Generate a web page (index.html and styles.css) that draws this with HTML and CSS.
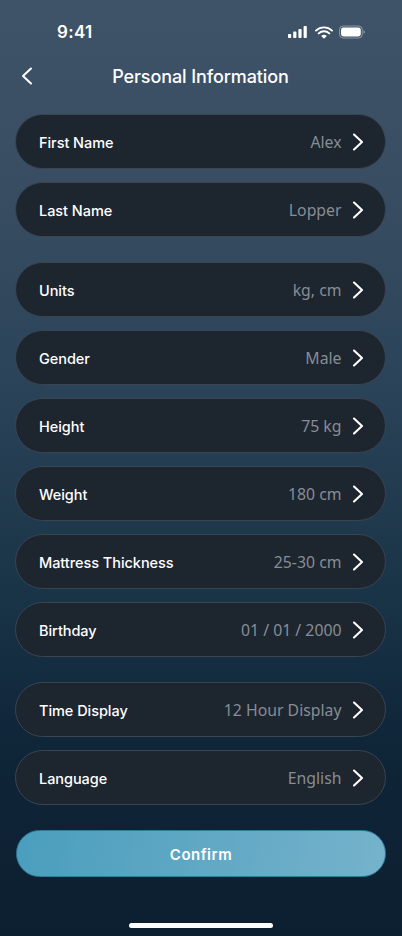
FILE: index.html
```html
<!DOCTYPE html>
<html lang="en">
<head>
<meta charset="utf-8">
<title>Personal Information</title>
<link rel="stylesheet" href="styles.css">
</head>
<body>
<svg class="defs" width="0" height="0" aria-hidden="true"><symbol id="chev" viewBox="0 0 12 18"><path d="M2 1.5 10 9l-8 7.5" fill="none" stroke="currentColor" stroke-width="2.1" stroke-linecap="round" stroke-linejoin="round"/></symbol></svg>
<main class="screen">
  <header class="status">
    <span class="time">9:41</span>
    <span class="status-icons">
      <svg class="signal" viewBox="0 0 20 12" width="20" height="12"><rect x="0" y="8" width="3.2" height="4" rx=".8"/><rect x="5.2" y="5.6" width="3.2" height="6.4" rx=".8"/><rect x="10.4" y="3" width="3.2" height="9" rx=".8"/><rect x="15.6" y="0" width="3.2" height="12" rx=".8"/></svg>
      <svg class="wifi" viewBox="0 0 18 13" width="18" height="13"><path d="M1 4.6a11.6 11.6 0 0 1 16 0M3.7 7.4a7.7 7.7 0 0 1 10.6 0" fill="none" stroke="#fff" stroke-width="1.9" stroke-linecap="round"/><path d="M6.2 9.9a3.9 3.9 0 0 1 5.6 0L9 12.8z" fill="#fff"/></svg>
      <svg class="battery" viewBox="0 0 26 14" width="26" height="14"><rect x=".5" y="1" width="22.8" height="12" rx="3.6" fill="none" stroke="#fff" stroke-opacity=".4"/><rect x="2" y="2.5" width="19.8" height="9" rx="2.4" fill="#fff"/><path d="M24.6 5.2v3.6c.8-.3 1.3-1 1.3-1.8s-.5-1.5-1.3-1.8z" fill="#fff" fill-opacity=".45"/></svg>
    </span>
  </header>
  <nav class="nav">
    <svg class="back" viewBox="0 0 12 18" width="12" height="18"><path d="M10 1.5 2 9l8 7.5" fill="none" stroke="#fff" stroke-width="2" stroke-linecap="round" stroke-linejoin="round"/></svg>
    <h1 class="title">Personal Information</h1>
  </nav>
  <section class="group">
    <div class="row"><span class="label">First Name</span><span class="value">Alex</span><svg class="chev"><use href="#chev"/></svg></div>
    <div class="row"><span class="label">Last Name</span><span class="value">Lopper</span><svg class="chev"><use href="#chev"/></svg></div>
  </section>
  <section class="group">
    <div class="row"><span class="label">Units</span><span class="value">kg, cm</span><svg class="chev"><use href="#chev"/></svg></div>
    <div class="row"><span class="label">Gender</span><span class="value">Male</span><svg class="chev"><use href="#chev"/></svg></div>
    <div class="row"><span class="label">Height</span><span class="value">75 kg</span><svg class="chev"><use href="#chev"/></svg></div>
    <div class="row"><span class="label">Weight</span><span class="value">180 cm</span><svg class="chev"><use href="#chev"/></svg></div>
    <div class="row"><span class="label">Mattress Thickness</span><span class="value">25-30 cm</span><svg class="chev"><use href="#chev"/></svg></div>
    <div class="row"><span class="label">Birthday</span><span class="value">01 / 01 / 2000</span><svg class="chev"><use href="#chev"/></svg></div>
  </section>
  <section class="group">
    <div class="row"><span class="label">Time Display</span><span class="value">12 Hour Display</span><svg class="chev"><use href="#chev"/></svg></div>
    <div class="row"><span class="label">Language</span><span class="value">English</span><svg class="chev"><use href="#chev"/></svg></div>
  </section>
  <button class="confirm" type="button">Confirm</button>
  <div class="home"></div>
</main>
</body>
</html>
```
FILE: styles.css
```css
* { box-sizing: border-box; }
html, body { margin: 0; padding: 0; }
body { width: 402px; height: 936px; overflow: hidden; background: #0c1f31; }
.defs { display: block; height: 0; }
.screen {
  width: 402px; height: 936px; display: flex; flex-direction: column;
  padding: 0 16px 0 15px;
  background: linear-gradient(180deg, #3f5368 0%, #3a4e63 18%, #2b4459 40%, #183246 65%, #0f2538 80%, #0c1f30 100%);
  font-family: Inter, "Liberation Sans", sans-serif; color: #fff;
}
.status { height: 65px; display: flex; justify-content: space-between; align-items: flex-start; padding: 22px 21px 0 42px; flex: none; }
.time { font-size: 17px; font-weight: 600; line-height: 20px; letter-spacing: .3px; color: #fff; }
.status-icons { display: flex; align-items: center; gap: 6.5px; height: 20px; }
.signal { fill: #fff; }
.nav { height: 24px; display: flex; align-items: center; justify-content: center; position: relative; flex: none; margin-bottom: 25px; }
.back { position: absolute; left: 6px; top: 2px; }
.title { margin: 0; font-size: 18px; font-weight: 500; line-height: 24px; letter-spacing: -.1px; color: #fff; }
.group { display: flex; flex-direction: column; gap: 13px; margin-bottom: 25px; flex: none; }
.row {
  height: 55px; display: flex; align-items: center; border-radius: 28px;
  background: #1d252f; padding: 0 21px 0 23px;
  border: 1px solid #3a4452;
}
.label { font-size: 14.5px; font-weight: 500; color: #fff; letter-spacing: -.05px; flex: 1; margin-top: 2px; }
.value { font-family: "Noto Sans", "Open Sans", sans-serif; font-size: 15.8px; color: #878d95; margin-right: 10.5px; }
.chev { width: 12px; height: 18px; color: #fff; flex: none; }
.confirm {
  height: 47px; width: 370px; flex: none; margin-left: 1px; padding: 2px 0 0; border-radius: 24px; border: 1px solid #2f7d9c;
  background: linear-gradient(100deg, #4a9ebd 0%, #76b2cb 100%);
  color: #fff; font-family: Inter, "Liberation Sans", sans-serif; font-size: 15px; font-weight: 600; letter-spacing: .5px;
}
.home { width: 144px; height: 5px; border-radius: 3px; background: #fff; margin: 46px auto 0; flex: none; }
```
